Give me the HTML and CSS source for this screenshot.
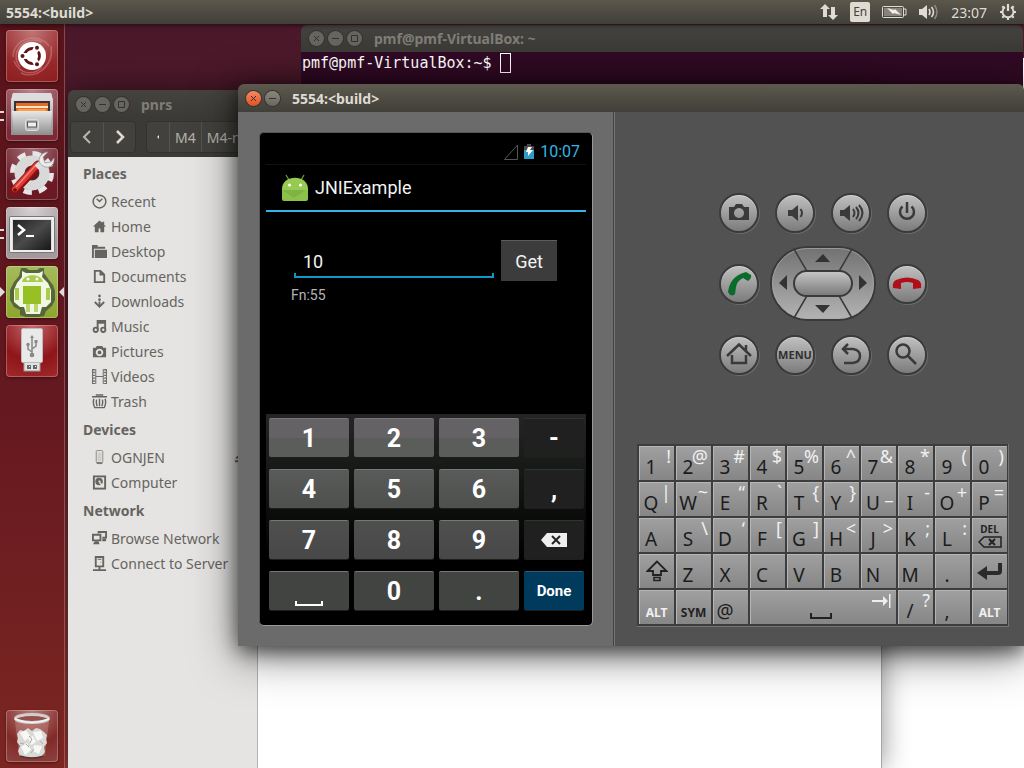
FILE: index.html
```html
<!DOCTYPE html>
<html lang="en">
<head>
<meta charset="utf-8">
<title>5554:&lt;build&gt;</title>
<link rel="stylesheet" href="styles.css">
</head>
<body>
<header class="topbar">
  <span class="topbar-title">5554:&lt;build&gt;</span>
  <div class="indicators">
    <svg width="18" height="18" viewBox="0 0 18 18" fill="#dfdbd2"><path d="M5 1L0 6h3v8h4V6h3zM13 17l5-5h-3V4h-4v8H8z"/></svg>
    <span class="lang">En</span>
    <svg width="25" height="14" viewBox="0 0 25 14"><rect x=".5" y="1.5" width="21" height="11" rx="1" fill="none" stroke="#dfdbd2"/><rect x="2" y="3" width="18" height="8" fill="#85837c"/><path d="M22 4h2v6h-2" fill="none" stroke="#dfdbd2"/><path d="M5 3l7 2 1-1 6 6-7-2-1 1z" fill="#f0ede6"/></svg>
    <svg width="20" height="16" viewBox="0 0 20 16"><path d="M0 5h3l5-4v14l-5-4H0z" fill="#dfdbd2"/><path d="M10 5q2 3 0 6M12.500 3q4 5 0 10" fill="none" stroke="#dfdbd2" stroke-width="1.600"/><path d="M15.500 1q5 7 0 14" fill="none" stroke="#8b8880" stroke-width="1.500"/></svg>
    <time class="clock">23:07</time>
    <svg width="18" height="18" viewBox="0 0 18 18" fill="none" stroke="#dfdbd2"><path d="M6 4.200A5.500 5.500 0 1 0 12 4.200" stroke-width="2"/><path d="M9 1v7" stroke-width="2.200"/><path d="M1 9h2M15 9h2M9 15v2M3.300 14.700l1.500-1.500M14.700 14.700l-1.500-1.500M3.300 3.300l1.500 1.500M14.700 3.300l-1.500 1.500" stroke-width="2.200"/></svg>
  </div>
</header>
<main class="desktop">
  <nav class="launcher">
    <button class="tile tile-dash" aria-label="Dash"><svg width="52" height="52" viewBox="0 0 52 52"><path d="M7 27C7 10 30 0 43 16M45 16C48 36 30 50 15 43M14 37C2 22 20 4 36 12M36 37c-8 9-22 8-28-6" fill="none" stroke="#e0a0a0" stroke-opacity=".4" stroke-width="1.500"/><circle cx="26" cy="26" r="14" fill="#fff"/><circle cx="26" cy="26" r="7.500" fill="none" stroke="#5f1418" stroke-width="2.800"/><path d="M26 26H15M26 26l6-10M26 26l6 10" stroke="#fff" stroke-width="6"/><g fill="#5f1418"><circle cx="16.500" cy="26" r="2"/><circle cx="31" cy="17.800" r="2"/><circle cx="31" cy="34.200" r="2"/></g></svg></button>
    <button class="tile tile-files double" aria-label="Files"><svg width="52" height="52" viewBox="0 0 52 52"><defs><linearGradient id="cab" x2="0" y2="1"><stop stop-color="#e8e8e8"/><stop offset="1" stop-color="#8d8d8d"/></linearGradient></defs><path d="M7 4h38l2 8v34H5V12z" fill="url(#cab)"/><path d="M7 4h38l2 7H5z" fill="#ddd"/><path d="M8 12h36v11H8z" fill="#3e3230"/><path d="M10 14h32v10H10z" fill="#e26a2c"/><path d="M10 17h32v2H10z" fill="#fbe6c0"/><path d="M12 20h28v3H12z" fill="#f4a14d"/><path d="M6 22h40l-2 24H8z" fill="url(#cab)"/><rect x="19.500" y="30.500" width="13" height="11" rx="2" fill="#bbb" stroke="#dedede"/><rect x="21.500" y="33" width="9" height="5" fill="#eee" stroke="#555"/></svg></button>
    <button class="tile tile-settings" aria-label="System Settings"><svg width="52" height="52" viewBox="0 0 52 52"><circle cx="26" cy="25" r="19.500" fill="none" stroke="#e6e6e6" stroke-width="5" stroke-dasharray="8.300 7"/><circle cx="26" cy="25" r="12.500" fill="none" stroke="#d9d9d9" stroke-width="10"/><circle cx="26" cy="25" r="7" fill="#5c1b20"/><path d="M9 42L32 17" stroke="#8c1010" stroke-width="9" stroke-linecap="round"/><path d="M9 41L31 17" stroke="#de3831" stroke-width="6" stroke-linecap="round"/><path d="M10 39L29 18" stroke="#f4837d" stroke-width="1.500"/><path d="M31 20L37 14" stroke="#dedede" stroke-width="7"/><path d="M42 4l-5 5 2 6 6-1 3-4c1 8-6 11-11 8-7-4-4-13 5-14z" fill="#ececec" stroke="#999" stroke-width=".8"/><circle cx="9" cy="42" r="1.800" fill="#6f0e0e"/></svg></button>
    <button class="tile tile-terminal double" aria-label="Terminal"><svg width="52" height="52" viewBox="0 0 52 52"><defs><linearGradient id="scr" x2="1" y2="1"><stop stop-color="#222"/><stop offset=".5" stop-color="#4a4a4a"/><stop offset="1" stop-color="#161616"/></linearGradient></defs><rect x="3.500" y="9.500" width="45" height="36" rx="1" fill="#ddd" stroke="#777"/><rect x="5" y="11" width="42" height="33" fill="none" stroke="#fff"/><rect x="7" y="13" width="38" height="30" fill="url(#scr)"/><path d="M12 18l6 5-6 5" fill="none" stroke="#fff" stroke-width="2.500"/><path d="M20 29h8" stroke="#fff" stroke-width="2"/></svg></button>
    <button class="tile tile-android active" aria-label="Android emulator"><svg width="52" height="52" viewBox="0 0 52 52"><path d="M15 2h5l3 2h8l3-2h4v5l5 7 4 5 2 6v9l-3 6-6 5-2 5-6 1H20l-6-2v-5l-6-3-4-7V24l4-8 5-6z" fill="#4a5a3a" fill-opacity=".85"/><path d="M16 5l4 2h13l4-2-1 6 6 6 3 7v12l-5 5h-4l-2 7H20l-2-7h-4l-6-5V24l3-7 5-6z" fill="#f2f7e4"/><path d="M16 16c1-9 20-9 21 0z" fill="#a9cc4e"/><path d="M17 20h18v18H17z" fill="#97c024"/><path d="M9 22h4v12H9zM40 22h4v12h-4z" fill="#a9cc4e"/><circle cx="22" cy="13" r="1.500" fill="#fff"/><circle cx="31" cy="13" r="1.500" fill="#fff"/><path d="M20 38h4v8h-4zM28 38h4v8h-4z" fill="#b9d66d"/></svg></button>
    <button class="tile tile-usb" aria-label="USB drive"><svg width="52" height="52" viewBox="0 0 52 52"><rect x="18" y="37" width="16" height="9" fill="#e2e2e2" stroke="#999"/><path d="M21 40h4v4h-4zM27 40h4v4h-4z" fill="#666"/><path d="M23 41h1v1h-1zM29 41h1v1h-1z" fill="#fff"/><rect x="15.500" y="3.500" width="21" height="34" rx="1.500" fill="#e9e9e9" stroke="#bbb"/><path d="M26 30V12M26 27l-4-3v-4M26 24l4-3v-4" fill="none" stroke="#888" stroke-width="1.500"/><circle cx="26" cy="30" r="2.300" fill="#888"/><circle cx="22" cy="19.500" r="1.700" fill="#888"/><path d="M28.500 15h3v3h-3zM24 13l2-3 2 3z" fill="#888"/></svg></button>
    <button class="tile tile-trash" aria-label="Trash"><svg width="52" height="52" viewBox="0 0 52 52"><path d="M9 11h34l-4 35q-13 4-26 0z" fill="#d9b0ac" fill-opacity=".3"/><path d="M11 24l3-4 4 1 4-3 4 3 4-3 4 1 4 3 3 3-1 4 1 4-3 4 1 5-3 4q-10 3-22 0l-2-5 2-5-3-4 1-4z" fill="#d9d9d5"/><path d="M14 23l6-3 4 6-5 5zM27 22l8-1 2 7-6 3zM15 37l6-4 4 7-6 5zM28 35l8 1-3 8-6-3zM22 28l5-2 3 6-5 3z" fill="#f8f8f5"/><path d="M23 26l3 3-2 4M34 31l3 3M14 33l4 1M25 43l3-4M20 34l3 3" fill="none" stroke="#aaa9a4"/><path d="M14 46q12 4 24 0" fill="none" stroke="#4c3a38" stroke-width="1.500"/><ellipse cx="26" cy="8.500" rx="16.500" ry="4" fill="#94504d" stroke="#cfd0cd" stroke-width="3"/><path d="M9 9q17 7 34 0" fill="none" stroke="#f4f4f1" stroke-width="1.500"/></svg></button>
  </nav>
  <div class="workspace">
    <section class="window editor-window" aria-label="Editor"></section>

    <section class="window terminal-window">
      <div class="titlebar inactive">
        <button class="wb" aria-label="Close"><svg width="15" height="15" viewBox="0 0 15 15"><path d="M5 5l5 5M10 5l-5 5"/></svg></button>
        <button class="wb" aria-label="Minimize"><svg width="15" height="15" viewBox="0 0 15 15"><path d="M4 7.500h7"/></svg></button>
        <button class="wb" aria-label="Maximize"><svg width="15" height="15" viewBox="0 0 15 15"><path d="M4.500 4.500h6v6h-6z"/></svg></button>
        <h2 class="wtitle">pmf@pmf-VirtualBox: ~</h2>
      </div>
      <div class="prompt"><span>pmf@pmf-VirtualBox:~$</span><span class="cursor"></span></div>
    </section>

    <section class="window file-window">
      <div class="titlebar inactive">
        <button class="wb" aria-label="Close"><svg width="15" height="15" viewBox="0 0 15 15"><path d="M5 5l5 5M10 5l-5 5"/></svg></button>
        <button class="wb" aria-label="Minimize"><svg width="15" height="15" viewBox="0 0 15 15"><path d="M4 7.500h7"/></svg></button>
        <button class="wb" aria-label="Maximize"><svg width="15" height="15" viewBox="0 0 15 15"><path d="M4.500 4.500h6v6h-6z"/></svg></button>
        <h2 class="wtitle">pnrs</h2>
      </div>
      <div class="toolbar">
        <div class="group">
          <button class="tb nav" aria-label="Back"><svg width="12" height="14" viewBox="0 0 12 14"><path d="M9 1L3 7l6 6" fill="none" stroke="#b9b7b1" stroke-width="2"/></svg></button>
          <button class="tb nav" aria-label="Forward"><svg width="12" height="14" viewBox="0 0 12 14"><path d="M3 1l6 6-6 6" fill="none" stroke="#dfdbd2" stroke-width="2.500"/></svg></button>
        </div>
        <div class="group">
          <button class="tb more" aria-label="Parent folders"><svg width="4" height="6" viewBox="0 0 4 6"><path d="M3 1v4L1 3z" fill="#dfdbd2"/></svg></button>
          <button class="tb">M4</button>
          <button class="tb">M4-ndk</button>
        </div>
      </div>
      <div class="file-body">
        <nav class="sidebar">
          <h3>Places</h3>
          <a href="#"><svg viewBox="0 0 16 16"><circle cx="8" cy="8" r="6.800" fill="none" stroke="#666460" stroke-width="1.600"/><path d="M5 5l3 3 3-3" fill="none" stroke="#666460" stroke-width="1.600"/></svg>Recent</a>
          <a href="#"><svg viewBox="0 0 16 16"><path d="M8 1.500L1 8h2v6h4v-4h2v4h4V8h2l-2-2V3h-2v1z"/></svg>Home</a>
          <a href="#"><svg viewBox="0 0 16 16"><path d="M0 1h6v2h8v2H2v10H0zM3 6h13v9H3z"/></svg>Desktop</a>
          <a href="#"><svg viewBox="0 0 16 16"><path d="M3 2h6l4 4v8H3z" class="st"/><path d="M8 2h2l3 3v2H8z"/></svg>Documents</a>
          <a href="#"><svg viewBox="0 0 16 16"><circle cx="8" cy="2" r="1.400"/><circle cx="8" cy="6" r="1.400"/><path d="M7 8h2v5H7z"/><path d="M3 8.500l5 5 5-5" class="st"/></svg>Downloads</a>
          <a href="#"><svg viewBox="0 0 16 16"><path d="M6 11V2h8v9M6 4h8" class="st"/><circle cx="4" cy="11.500" r="2.300" class="st"/><circle cx="12" cy="11.500" r="2.300" class="st"/></svg>Music</a>
          <a href="#"><svg viewBox="0 0 16 16"><path fill-rule="evenodd" d="M1 4h3l1-2h6l1 2h3v10H1zM8 5a4 4 0 1 0 .01 0z"/><circle cx="8" cy="9" r="2"/></svg>Pictures</a>
          <a href="#"><svg viewBox="0 0 16 16"><path d="M2 0v16M14 0v16" class="st" stroke-dasharray="1.500 1.500"/><path d="M4 0v16M12 0v16M.500 0v16M15.500 0v16M4 8h8" fill="none" stroke="#666460"/></svg>Videos</a>
          <a href="#"><svg viewBox="0 0 16 16"><path d="M0 3h16M4 1h8M2 5q-1.500 5 1 9.500h10q2.500-4.500 1-9.500M5 6q-1 3 .5 7M8 5v8M11 6q1 3-.5 7" fill="none" stroke="#666460" stroke-width="1.500"/></svg>Trash</a>
          <h3>Devices</h3>
          <a href="#"><svg viewBox="0 0 16 16"><rect x="4.500" y=".5" width="7" height="13" rx="1" fill="#e0dfdd" stroke="#8d8b88"/><path d="M5 13h6v2H5z" fill="#777"/><path d="M6 3h4v9H6z" fill="#cfcecc"/></svg>OGNJEN<svg class="eject" viewBox="0 0 16 16"><path d="M1 9l7-7 7 7zM1 11h14v2H1z"/></svg></a>
          <a href="#"><svg viewBox="0 0 16 16"><rect x="2" y="1.500" width="12" height="13" class="st"/><circle cx="7.500" cy="7" r="4"/><circle cx="8" cy="7" r="1.200" fill="#e5e4e2"/><path d="M8 8l4 4" stroke="#e5e4e2" stroke-width="1.500"/></svg>Computer</a>
          <h3>Network</h3>
          <a href="#"><svg viewBox="0 0 16 16"><path d="M1 4h8v6H1zM7 2.500V1h8v6h-4" class="st"/><path d="M3 11h4l1 3H1zM11 8h4v3h-4z"/></svg>Browse Network</a>
          <a href="#"><svg viewBox="0 0 16 16"><path d="M4 1h8v10H4zM8 11v4M1 15h14" class="st"/><path d="M6 3h4v1H6zM9 6h1v1H9z"/></svg>Connect to Server</a>
        </nav>
        <div class="file-view"></div>
      </div>
    </section>

    <section class="window emulator">
      <div class="titlebar">
        <button class="wb close" aria-label="Close"><svg width="15" height="15" viewBox="0 0 15 15"><path d="M5 5l5 5M10 5l-5 5"/></svg></button>
        <button class="wb" aria-label="Minimize"><svg width="15" height="15" viewBox="0 0 15 15"><path d="M4 7.500h7"/></svg></button>
        <h1 class="wtitle">5554:&lt;build&gt;</h1>
      </div>
      <div class="emu-body">
        <div class="device-pane">
          <div class="phone">
            <div class="statusbar">
              <svg width="14" height="16" viewBox="0 0 14 16"><path d="M13.500 1v14.500H.500z" fill="none" stroke="#555"/></svg>
              <svg width="10" height="16" viewBox="0 0 10 16"><path d="M3 0h4v2h3v4H0V2h3z" fill="#4a4a4a"/><path d="M0 6h10v9H0z" fill="#2e9cc6"/><path d="M4 3h4L6 6h3l-5 6V8H2z" fill="#fff"/></svg>
              <time>10:07</time>
            </div>
            <div class="actionbar">
              <svg width="26" height="28" viewBox="0 0 26 28"><path d="M4 1l3 5M22 1l-3 5" stroke="#6f9a32" stroke-width="1.300"/><path d="M0 15C0 0 26 0 26 15v1H0z" fill="#97ca50"/><path d="M0 16h26v9q0 2-2 2H2q-2 0-2-2z" fill="#8bc34a"/><path d="M0 16h24L12 24z" fill="#80b344"/><circle cx="7.500" cy="11" r="1.600" fill="#fff"/><circle cx="18.500" cy="11" r="1.600" fill="#fff"/></svg>
              <h2>JNIExample</h2>
            </div>
            <div class="app">
              <div class="entry-row">
                <div class="entry"><input type="text" value="10" aria-label="Number"></div>
                <button class="get">Get</button>
              </div>
              <p>Fn:55</p>
            </div>
            <div class="numpad">
              <button class="light">1</button><button class="light">2</button><button class="light">3</button><button class="dark">-</button>
              <button class="mid">4</button><button class="mid">5</button><button class="mid">6</button><button class="dark">,</button>
              <button class="low">7</button><button class="low">8</button><button class="low">9</button>
              <button class="dark" aria-label="Backspace"><svg width="26" height="14" viewBox="0 0 26 14"><path d="M6 0h20v14H6L0 7z" fill="#eee"/><path d="M11 3l8 8M19 3l-8 8" stroke="#222" stroke-width="2"/></svg></button>
              <button class="base space" aria-label="Space"><svg width="28" height="6" viewBox="0 0 28 6"><path d="M1 0v4h26V0" fill="none" stroke="#fff" stroke-width="2"/></svg></button><button class="base">0</button><button class="base">.</button><button class="done">Done</button>
            </div>
          </div>
        </div>
        <div class="control-pane">
          <div class="hardware">
            <button class="hw" aria-label="Camera"><svg viewBox="0 0 40 40"><path fill-rule="evenodd" d="M10 14h5l2-3h6l2 3h5v13H10zM20 15a5 5 0 1 0 .01 0z"/></svg></button>
            <button class="hw" aria-label="Volume down"><svg viewBox="0 0 40 40"><path d="M13 17h4l6-5v16l-6-5h-4z"/><path d="M25.500 16q3 4 0 8" class="ln"/></svg></button>
            <button class="hw" aria-label="Volume up"><svg viewBox="0 0 40 40"><path d="M9 17h4l6-5v16l-6-5H9z"/><path d="M22 16q3 4 0 8M25 14q5 6 0 12M28 12q7 8 0 16" class="ln"/></svg></button>
            <button class="hw" aria-label="Power"><svg viewBox="0 0 40 40"><path d="M15.500 13.500a7 7 0 1 0 9 0M20 9v11" class="ln thick"/></svg></button>
            <button class="hw" aria-label="Call"><svg viewBox="0 0 40 40"><path d="M9 28Q11 12 27 8l5 3q1 3-3 6l-5-3q-6 3-7 9l-1 7q-4 4-7-2z" fill="#0b6b2b"/></svg></button>
            <div class="dpad">
              <svg viewBox="0 0 106 75" width="106" height="75"><defs><linearGradient id="pad" x2="0" y2="1"><stop stop-color="#717171"/><stop offset="1" stop-color="#b4b4b4"/></linearGradient><linearGradient id="ok" x2="0" y2="1"><stop stop-color="#c8c8c8"/><stop offset="1" stop-color="#777"/></linearGradient></defs><rect x="1" y="1" width="104" height="73" rx="36.500" fill="url(#pad)" stroke="#3a3a3a" stroke-width="2"/><rect x="2.500" y="2.500" width="101" height="70" rx="35" fill="none" stroke="#aaa" stroke-opacity=".7"/><path d="M24 3l14 24M82 3L68 27M24 72l14-24M82 72L68 48" stroke="#3a3a3a" stroke-width="1.500"/><rect x="24" y="25" width="58" height="25" rx="12.500" fill="url(#ok)" stroke="#3a3a3a" stroke-width="2"/><path d="M45 16h15l-7-8zM45 59h15l-7 8zM17 29v15l-8-7zM89 29v15l8-7z" fill="#333"/></svg>
            </div>
            <button class="hw" aria-label="End call"><svg viewBox="0 0 40 40"><path d="M6 24q-1-6 3-8 11-5 22 0 4 2 3 8l-8 1v-6q-6-2-12 0v6z" fill="#b00e18"/></svg></button>
            <button class="hw" aria-label="Home"><svg viewBox="0 0 40 40"><path d="M8 21L20 9.500 32 21M27 15v-5M13 20v8h14v-8" class="ln thick"/></svg></button>
            <button class="hw menu">MENU</button>
            <button class="hw" aria-label="Back"><svg viewBox="0 0 40 40"><path d="M17 9l-5 5 5 5M12 14h10q7 1 7 7t-7 7h-9" class="ln thick"/></svg></button>
            <button class="hw" aria-label="Search"><svg viewBox="0 0 40 40"><circle cx="16" cy="16" r="6.500" class="ln thick"/><path d="M21 21l8 8" class="ln thick"/></svg></button>
          </div>
          <div class="keyboard">
            <button><b>1</b><i>!</i></button><button><b>2</b><i>@</i></button><button><b>3</b><i>#</i></button><button><b>4</b><i>$</i></button><button><b>5</b><i>%</i></button><button><b>6</b><i>^</i></button><button><b>7</b><i>&amp;</i></button><button><b>8</b><i>*</i></button><button><b>9</b><i>(</i></button><button><b>0</b><i>)</i></button>
            <button><b>Q</b><i>|</i></button><button><b>W</b><i>~</i></button><button><b>E</b><i>“</i></button><button><b>R</b><i>`</i></button><button><b>T</b><i>{</i></button><button><b>Y</b><i>}</i></button><button><b>U</b><i>_</i></button><button><b>I</b><i>-</i></button><button><b>O</b><i>+</i></button><button><b>P</b><i>=</i></button>
            <button><b>A</b></button><button><b>S</b><i>\</i></button><button><b>D</b><i>‘</i></button><button><b>F</b><i>[</i></button><button><b>G</b><i>]</i></button><button><b>H</b><i>&lt;</i></button><button><b>J</b><i>&gt;</i></button><button><b>K</b><i>;</i></button><button><b>L</b><i>:</i></button>
            <button class="del"><span>DEL</span><svg width="24" height="12" viewBox="0 0 24 12"><path d="M6 1h17v10H6L1 6z" fill="none" stroke="#222" stroke-width="1.500"/><path d="M11 3l6 6M17 3l-6 6" stroke="#222" stroke-width="2"/></svg></button>
            <button class="pic" aria-label="Shift"><svg width="22" height="22" viewBox="0 0 22 22"><path d="M11 1.500L1.500 11H7v4h8v-4h5.500z" fill="none" stroke="#222" stroke-width="1.800"/><path d="M8 17.500h6v3H8z" fill="none" stroke="#222" stroke-width="1.600"/></svg></button><button><b>Z</b></button><button><b>X</b></button><button><b>C</b></button><button><b>V</b></button><button><b>B</b></button><button><b>N</b></button><button><b>M</b></button><button><b>.</b></button><button class="pic" aria-label="Enter"><svg width="26" height="18" viewBox="0 0 26 18"><path d="M23 1v8q0 2-2 2H8" fill="none" stroke="#2a2a2a" stroke-width="4"/><path d="M10 4v14L0 11z" fill="#2a2a2a"/></svg></button>
            <button class="word pale">ALT</button><button class="word">SYM</button><button><b>@</b></button>
            <button class="spacebar" aria-label="Space"><svg class="spc" width="22" height="7" viewBox="0 0 22 7"><path d="M1 0v5h20V0" fill="none" stroke="#222" stroke-width="2"/></svg><svg class="tabkey" width="19" height="14" viewBox="0 0 19 14"><path d="M0 6h11V2l5 5-5 5V8H0zM17 0h1.500v14H17z" fill="#eee"/></svg></button>
            <button><b>/</b><i>?</i></button><button><b>,</b></button><button class="word pale">ALT</button>
          </div>
        </div>
      </div>
    </section>
  </div>
</main>
</body>
</html>
```

FILE: styles.css
```css
* { box-sizing: border-box; }
body {
  margin: 0;
  height: 100vh;
  display: flex;
  flex-direction: column;
  overflow: hidden;
  font-family: "Noto Sans", sans-serif;
  font-size: 14px;
}
button { font: inherit; border: 0; padding: 0; margin: 0; background: none; color: inherit; }
h1, h2, h3, p { margin: 0; font-size: inherit; }
svg { display: block; flex: none; }

.topbar {
  height: 24px;
  flex: none;
  display: flex;
  align-items: center;
  justify-content: space-between;
  padding: 0 7px 0 6px;
  background: linear-gradient(#5b574c, #403f39);
  color: #dfdbd2;
  position: relative;
  z-index: 5;
  box-shadow: 0 1px 5px rgba(0, 0, 0, .6);
}
.topbar-title { font-weight: 700; }
.indicators { display: flex; align-items: center; gap: 12px; }
.lang {
  width: 20px;
  height: 20px;
  border-radius: 2px;
  background: #dfdbd2;
  color: #45433d;
  font-size: 12px;
  line-height: 20px;
  text-align: center;
}

.desktop {
  flex: 1;
  min-height: 0;
  display: flex;
  background: linear-gradient(165deg, #4b182b 0%, #4b1a27 25%, #8f3b35 80%, #a04a3a 100%);
}
.launcher {
  flex: none;
  display: flex;
  flex-direction: column;
  gap: 7px;
  padding: 6px;
  border-right: 1px solid rgba(235, 170, 170, .35);
  background: linear-gradient(#59131a, #641820 50%, #7c2622);
}
.tile {
  position: relative;
  width: 52px;
  height: 52px;
  border-radius: 4px;
  box-shadow: inset 0 0 0 1px rgba(255, 255, 255, .25), 0 1px 3px rgba(0, 0, 0, .4);
}
.tile-dash { background: radial-gradient(circle at 50% 0, #c07777, #98292b 65%, #8b1d1f); }
.tile-files { background: radial-gradient(circle at 50% 0, #b9868e, #7d2a36 80%); }
.tile-settings { background: radial-gradient(circle at 50% 0, #a47078, #6b1a24 70%); }
.tile-terminal { background: radial-gradient(circle at 50% 0, #d8d3d4, #a3989b 70%); }
.tile-android { background: linear-gradient(#a5bb5c, #8ea52f); }
.tile-usb { background: radial-gradient(circle at 50% 0, #c66a6c, #8e1519 60%, #a02a2c); }
.tile-trash { background: radial-gradient(circle at 50% 0, #b97a77, #812a28 60%, #8f4340); margin-top: auto; }
.double::before {
  content: "";
  position: absolute;
  left: -6px;
  top: 22px;
  width: 4px;
  height: 6px;
  border: solid #dfdbdb;
  border-width: 2px 0;
}
.active::before, .active::after {
  content: "";
  position: absolute;
  top: 21px;
  border: 5px solid transparent;
}
.active::before { left: -6px; border-left-color: #dfdbdb; border-right: 0; }
.active::after { right: -6px; border-right-color: #dfdbdb; border-left: 0; }

.workspace { flex: 1; position: relative; overflow: hidden; }
.window { position: absolute; border-radius: 6px 6px 0 0; }
.titlebar {
  height: 28px;
  display: flex;
  align-items: center;
  gap: 4px;
  padding: 0 8px;
  border-radius: 6px 6px 0 0;
  background: linear-gradient(#5d594e, #403f39);
  color: #dfdbd2;
}
.titlebar.inactive { background: linear-gradient(#44433f, #3b3a36); color: #7f7d77; }
.wtitle { font-size: 14px; font-weight: 700; margin-left: 8px; }
.wb {
  width: 15px;
  height: 15px;
  border-radius: 50%;
  background: linear-gradient(#8a877d, #68665e);
  box-shadow: 0 0 0 1px #35342f;
}
.wb svg { fill: none; stroke: #33322e; stroke-width: 1; }
.wb.close { background: linear-gradient(#f68a63, #e2501f); }
.inactive .wb { background: #666560; }

.editor-window { left: 635px; right: -40px; top: 34px; bottom: 0; background: #fff; }
.terminal-window { left: 236px; right: 1px; top: 1px; height: 300px; background: #300a24; }
.terminal-window .titlebar { height: 27px; }
.prompt {
  display: flex;
  align-items: center;
  gap: 8px;
  padding: 0 1px;
  font-family: "DejaVu Sans Mono", monospace;
  font-size: 15px;
  line-height: 22px;
  color: #fff;
}
.cursor { width: 11px; height: 20px; border: 1px solid #fff; }

.file-window {
  left: 3px;
  top: 66px;
  bottom: 0;
  width: 814px;
  display: flex;
  flex-direction: column;
  box-shadow: 0 0 28px rgba(0, 0, 0, .45);
}
.toolbar {
  height: 39px;
  flex: none;
  display: flex;
  gap: 10px;
  padding: 3px 3px 4px 2px;
  background: #3b3a36;
}
.group { display: flex; border: 1px solid #33322e; border-radius: 4px; background: #42413d; color: #b5b3ab; }
.tb { padding: 0 5px; display: grid; place-items: center; }
.tb + .tb { border-left: 1px solid #55534e; }
.tb.nav { width: 32px; }
.tb.more { width: 22px; }
.file-body { flex: 1; display: flex; min-height: 0; }
.sidebar {
  width: 190px;
  flex: none;
  padding-top: 1px;
  background: #e5e4e2;
  border-right: 1px solid #b4b3af;
  color: #666460;
}
.sidebar h3 { font-size: 14px; line-height: 31px; padding-left: 15px; }
.sidebar a {
  display: flex;
  align-items: center;
  gap: 4px;
  height: 25px;
  padding-left: 24px;
  color: inherit;
  text-decoration: none;
  white-space: nowrap;
}
.sidebar svg { width: 15px; height: 15px; fill: #666460; }
.sidebar .st { fill: none; stroke: #666460; stroke-width: 2; }
.sidebar .eject { margin-left: auto; margin-right: 8px; }
.file-view { flex: 1; background: #fff; border-right: 1px solid #a5a5a5; }

.emulator {
  left: 173px;
  right: 0;
  top: 60px;
  box-shadow: 0 5px 20px rgba(0, 0, 0, .6), 0 10px 45px rgba(0, 0, 0, .5);
}
.emu-body { display: flex; }
.device-pane { background: #6b6b6b; padding: 20px 20px 19px 21px; }
.phone {
  width: 334px;
  border: 1px solid #555;
  border-right-color: #999;
  border-bottom-color: #999;
  border-radius: 5px;
  background: #000;
  padding: 6px 6px 5px;
  font-family: Roboto, sans-serif;
  color: #f3f3f3;
}
.statusbar {
  display: flex;
  align-items: center;
  justify-content: flex-end;
  gap: 6px;
  height: 26px;
  padding-right: 6px;
  border-bottom: 1px solid #111;
  font-size: 16px;
  color: #33b5e5;
}
.actionbar {
  display: flex;
  align-items: center;
  gap: 7px;
  height: 47px;
  padding-left: 16px;
  border-bottom: 2px solid #33b5e5;
}
.actionbar h2 { font-size: 18px; font-weight: 400; }
.app { height: 202px; padding: 28px 29px 0 25px; }
.entry-row { display: flex; gap: 7px; padding-left: 3px; }
.entry { flex: 1; padding-bottom: 3px; }
.entry input {
  display: block;
  width: 100%;
  height: 38px;
  padding: 6px 9px 0;
  border: 0;
  border-bottom: 2px solid #0e97c9;
  background:
    linear-gradient(#0e97c9, #0e97c9) 0 100% / 2px 3px no-repeat,
    linear-gradient(#0e97c9, #0e97c9) 100% 100% / 2px 3px no-repeat #000;
  color: #f3f3f3;
  font: 18px Roboto, sans-serif;
}
.get {
  width: 56px;
  height: 41px;
  background: #3b3c3b;
  border-top: 1px solid #5d5d5d;
  font-size: 18px;
}
.app p { font-size: 14px; line-height: 20px; padding-top: 4px; color: #b5b5b5; }
.numpad {
  display: grid;
  grid-template-columns: 4fr 4fr 4fr 3fr;
  grid-auto-rows: 39px;
  gap: 12px 5px;
  padding: 4px 2px 10px 3px;
  background: linear-gradient(#252525, #141814 30%, #000 70%);
}
.numpad button {
  display: grid;
  place-items: center;
  border-radius: 2px;
  border-top: 1px solid #777;
  box-shadow: 0 1px #1d1f1d;
  font-size: 25px;
  font-weight: 700;
  color: #fff;
}
.numpad .light { background: linear-gradient(#656266 50%, #5b5d5a 50%); }
.numpad .mid { background: linear-gradient(#595a59, #4e504e); }
.numpad .low { background: linear-gradient(#4e4f4e, #474847); }
.numpad .base { background: #424441; }
.numpad .dark { background: #202020; border-top-color: #333; }
.numpad .done { background: #003a5c; border-top-color: #2f5a74; font-size: 15px; }
.numpad .space { align-items: end; padding-bottom: 3px; }

.control-pane {
  flex: 1;
  margin-left: 1px;
  border-left: 1px solid #747474;
  padding: 65px 15px 19px 22px;
  background: #525252;
  box-shadow: -1px 0 #444;
}
.hardware {
  display: grid;
  grid-template-columns: repeat(4, 56px);
  grid-auto-rows: 71px;
  justify-content: center;
  place-items: center;
}
.hw {
  width: 40px;
  height: 40px;
  border: 2px solid #3b3b3b;
  border-radius: 50%;
  background: linear-gradient(#c0c0c0, #7c7c7c);
  box-shadow: inset 0 1px #d4d4d4, 1px 1px #6b6b6b;
  display: flex;
  align-items: center;
  justify-content: center;
  fill: #3a3a3a;
}
.hw svg { width: 40px; height: 40px; }
.hw .ln { fill: none; stroke: #3a3a3a; stroke-width: 2; }
.hw .thick { stroke-width: 2.5; }
.hw.menu { font-size: 11px; font-weight: 700; color: #303030; }
.dpad { grid-column: span 2; }

.keyboard {
  display: grid;
  grid-template-columns: repeat(10, 1fr);
  grid-auto-rows: 34px;
  gap: 2px;
  margin-top: 54px;
  padding: 2px 1px 2px 2px;
  border: solid #747474;
  border-width: 0 1px 1px 0;
  background: #3d3d3d;
}
.keyboard button {
  display: flex;
  justify-content: space-between;
  min-width: 0;
  background: linear-gradient(#a0a0a0, #868686);
  box-shadow: inset 1px 1px #b5b5b5;
}
.keyboard b {
  width: 24px;
  align-self: flex-end;
  font-weight: 400;
  font-size: 19px;
  line-height: 24px;
  padding-bottom: 1px;
  text-align: center;
  color: #1c1c1c;
}
.keyboard i {
  align-self: flex-start;
  margin-left: -12px;
  padding-right: 3px;
  font-style: normal;
  font-size: 18px;
  line-height: 20px;
  color: #f0f0f0;
}
.keyboard .word { justify-content: center; align-items: flex-end; padding-bottom: 3px; font-size: 12px; font-weight: 700; color: #222; }
.keyboard .word.pale { color: #f0f0f0; }
.keyboard .pic { align-items: center; justify-content: center; }
.keyboard .del { flex-direction: column; align-items: center; justify-content: center; gap: 1px; font-size: 10px; line-height: 12px; font-weight: 700; color: #222; }
.keyboard .spacebar { grid-column: span 4; display: grid; grid-template-columns: 1fr 22px 1fr; padding: 4px 5px 4px 0; }
.spacebar .spc { grid-column: 2; align-self: end; }
.spacebar .tabkey { justify-self: end; }
```
